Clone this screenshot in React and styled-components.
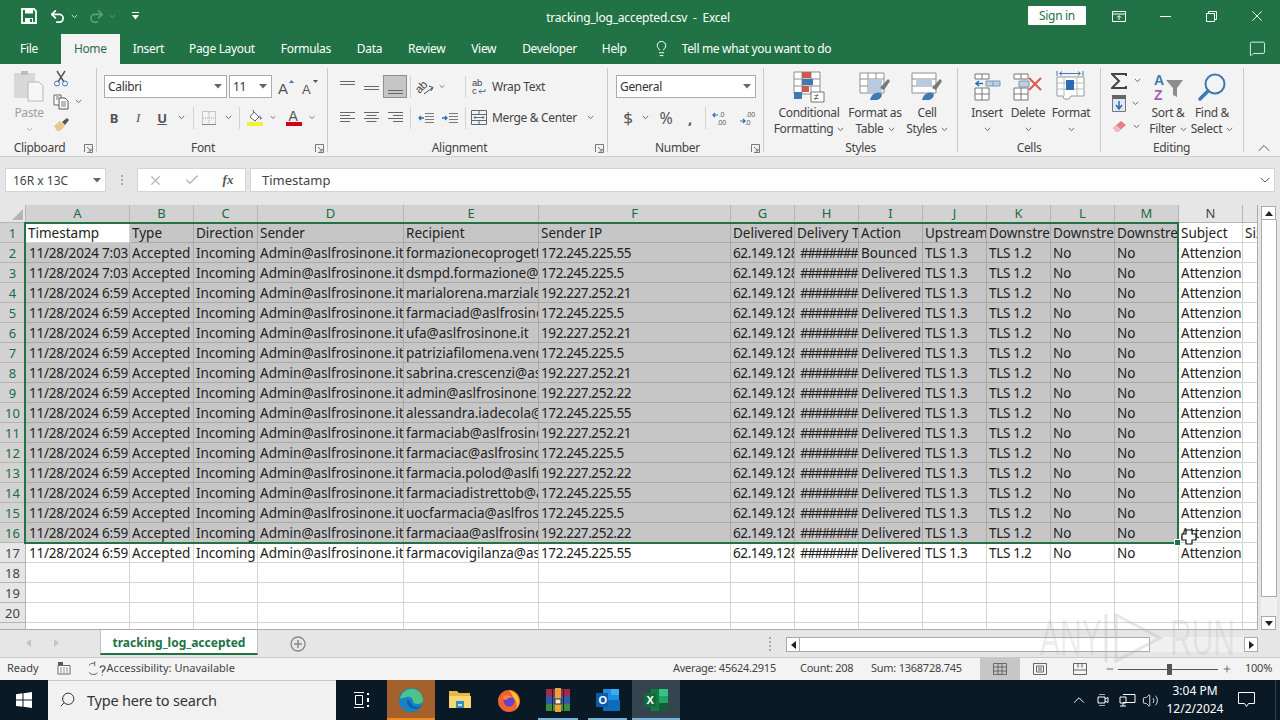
import React from 'react';
import styled, { createGlobalStyle } from 'styled-components';
import { Undo2, Redo2, Lightbulb, MessageSquare, X, Check, Minus, Plus, Search, ChevronUp, Volume2 } from 'lucide-react';

const GREEN = '#217346';
const UI = '"Noto Sans", "Open Sans", sans-serif';

const GlobalStyle = createGlobalStyle`
	html, body { margin: 0; padding: 0; background: #e6e6e6; }
	* { box-sizing: border-box; }
	#root { width: 1280px; height: 720px; overflow: hidden; }
`;

const Page = styled.div`
	position: relative;
	width: 1280px;
	height: 720px;
	display: flex;
	flex-direction: column;
	overflow: hidden;
	font-family: ${UI};
	font-size: 12px;
	letter-spacing: -0.33px;
	color: #444;
`;

/* title bar */
const TitleBar = styled.div`
	height: 32px;
	flex: none;
	background: ${GREEN};
	color: #fff;
	display: grid;
	grid-template-columns: 1fr auto 1fr;
	align-items: center;
`;
const QuickAccess = styled.div`
	display: flex;
	align-items: center;
	padding-left: 21px;
`;
const TitleText = styled.div`
	font-size: 12px;
	letter-spacing: -0.2px;
	padding: 2px 4px 0 0;
	white-space: pre;
`;
const WindowControls = styled.div`
	display: flex;
	align-items: center;
	justify-content: flex-end;
`;
const SignIn = styled.div`
	width: 58px;
	height: 19px;
	background: #fff;
	color: ${GREEN};
	border-radius: 1px;
	text-align: center;
	line-height: 19px;
	margin: 0 10px 2px 0;
`;
const WinButton = styled.div`
	width: 46px;
	height: 32px;
	display: flex;
	align-items: center;
	justify-content: center;
`;
const Slot = styled.div`
	width: ${p => p.$w || 24}px;
	height: ${p => p.$h || 22}px;
	margin-left: ${p => p.$ml || 0}px;
	flex: none;
	display: flex;
	align-items: center;
	justify-content: center;
	background: ${p => (p.$active ? '#c6c6c6' : 'transparent')};
	box-shadow: ${p => (p.$active ? 'inset 0 0 0 1px #8e8e8e' : 'none')};
`;

/* tabs */
const TabsRow = styled.div`
	height: 32px;
	flex: none;
	background: ${GREEN};
	display: flex;
	align-items: flex-end;
	color: #fff;
	padding-left: 20px;
`;
const Tab = styled.div`
	height: 30px;
	line-height: 30px;
	margin-left: ${p => p.$ml || 0}px;
	padding: ${p => (p.$active ? '0 13px' : '0')};
	background: ${p => (p.$active ? '#f3f3f3' : 'transparent')};
	color: ${p => (p.$active ? '#2c6e4b' : '#fff')};
	white-space: nowrap;
`;
const TellMe = styled.div`
	display: flex;
	align-items: center;
	height: 32px;
	margin-left: 26px;
	gap: 12px;
`;
const CommentSlot = styled.div`
	margin-left: auto;
	width: 46px;
	height: 32px;
	display: flex;
	align-items: center;
	justify-content: center;
`;

/* ribbon */
const Ribbon = styled.div`
	height: 93px;
	flex: none;
	background: #f3f3f3;
	border-bottom: 1px solid #cfcfcf;
	display: flex;
	padding-top: 4px;
`;
const Group = styled.div`
	width: ${p => p.$w}px;
	height: 84px;
	flex: none;
	display: flex;
	flex-direction: column;
	border-right: 1px solid #c8c8c8;
`;
const GroupBody = styled.div`
	height: 73px;
	flex: none;
	display: flex;
	align-items: flex-start;
`;
const GroupFoot = styled.div`
	height: 14px;
	flex: none;
	display: flex;
	align-items: center;
	line-height: 14px;
	padding-right: 3px;
`;
const FootLabel = styled.div`
	flex: 1;
	text-align: center;
	padding-left: ${p => p.$pl || 0}px;
	padding-right: ${p => p.$pr || 0}px;
`;
const ToolStack = styled.div`
	display: flex;
	flex-direction: column;
	gap: 8px;
	padding-top: 7px;
`;
const ToolRow = styled.div`
	display: flex;
	align-items: center;
	height: 23px;
	padding-left: ${p => p.$pl || 0}px;
`;
const Divider = styled.div`
	width: 1px;
	height: 22px;
	flex: none;
	margin-left: ${p => p.$ml || 0}px;
	background: #d2d2d2;
`;
const SelectBox = styled.div`
	width: ${p => p.$w}px;
	height: 23px;
	flex: none;
	margin-left: ${p => p.$ml || 0}px;
	background: #fff;
	border: 1px solid #ababab;
	display: flex;
	align-items: center;
	justify-content: space-between;
	padding: 0 4px 0 3px;
	color: #333;
`;
const RowText = styled.span`
	white-space: nowrap;
	color: #444;
`;
const BigButton = styled.div`
	width: ${p => p.$w}px;
	flex: none;
	margin-left: ${p => p.$ml || 0}px;
	padding-top: 3px;
	display: flex;
	flex-direction: column;
	align-items: center;
	color: ${p => (p.$dim ? '#a0a0a0' : '#444')};
`;
const BigIcon = styled.div`
	height: 32px;
	display: flex;
	align-items: center;
	justify-content: center;
`;
const BigLine = styled.div`
	height: 16px;
	line-height: 16px;
	margin-top: ${p => p.$mt || 0}px;
	white-space: nowrap;
	display: flex;
	align-items: center;
	gap: 4px;
`;
const SmallColumn = styled.div`
	display: flex;
	flex-direction: column;
	width: ${p => p.$w}px;
	margin-left: ${p => p.$ml || 0}px;
	padding-top: ${p => p.$pt || 0}px;
	gap: ${p => p.$gap || 0}px;
	flex: none;
`;
const SmallRow = styled.div`
	display: flex;
	align-items: center;
	height: 21px;
`;
const CollapseSlot = styled.div`
	flex: 1;
	display: flex;
	align-items: flex-end;
	justify-content: center;
	padding-left: 4px;
	height: 90px;
	color: #555;
`;

/* formula bar */
const FormulaRow = styled.div`
	height: 48px;
	flex: none;
	background: #e6e6e6;
	padding: 11px 5px 13px 5px;
	display: flex;
	align-items: stretch;
	letter-spacing: 0;
`;
const NameBox = styled.div`
	width: 101px;
	background: #fff;
	border: 1px solid #d4d4d4;
	display: flex;
	align-items: center;
	justify-content: space-between;
	padding: 0 4px 0 7px;
	color: #444;
`;
const GripDots = styled.div`
	width: 31px;
	display: flex;
	flex-direction: column;
	align-items: center;
	justify-content: center;
	gap: 2px;
	& > i {
		width: 2px;
		height: 2px;
		background: #aaa;
	}
`;
const FormulaButtons = styled.div`
	width: 109px;
	background: #fff;
	border: 1px solid #d4d4d4;
	display: flex;
	align-items: center;
	padding-left: 7px;
`;
const FormulaInput = styled.div`
	flex: 1;
	margin-left: 4px;
	background: #fff;
	border: 1px solid #d4d4d4;
	display: flex;
	align-items: center;
	justify-content: space-between;
	padding: 0 4px 0 11px;
	font-size: 13px;
	color: #444;
`;

/* sheet */
const SheetArea = styled.div`
	height: 425px;
	flex: none;
	display: flex;
	background: #e6e6e6;
`;
const GridWrap = styled.div`
	position: relative;
	width: 1258px;
	height: 425px;
	overflow: hidden;
	background: #fff;
	border-right: 1px solid #ababab;
	border-bottom: 1px solid #ababab;
`;
const Grid = styled.div`
	display: grid;
	grid-template-columns: 26px 104px 64px 64px 146px 135px 192px 64px 64px 64px 64px 64px 64px 64px 64px 15px;
	grid-template-rows: 18px;
	grid-auto-rows: 20px;
	font-size: 13.5px;
	letter-spacing: 0;
	color: #222;
`;
const Corner = styled.div`
	background: #e6e6e6;
	border-right: 1px solid #b5b5b5;
	border-bottom: 1px solid #b5b5b5;
	display: flex;
	align-items: flex-end;
	justify-content: flex-end;
	padding: 0 2px 2px 0;
`;
const ColHead = styled.div`
	background: ${p => (p.$sel ? '#d2d2d2' : '#e6e6e6')};
	color: ${p => (p.$sel ? '#1d6a43' : '#444')};
	border-right: 1px solid #b5b5b5;
	border-bottom: 1px solid #b5b5b5;
	text-align: center;
	line-height: 17px;
	font-size: 13px;
`;
const RowHead = styled.div`
	background: ${p => (p.$sel ? '#d2d2d2' : '#e6e6e6')};
	color: ${p => (p.$sel ? '#1d6a43' : '#444')};
	border-right: 1px solid #b5b5b5;
	border-bottom: 1px solid #b5b5b5;
	text-align: center;
	line-height: 20px;
	font-size: 13px;
`;
const Cell = styled.div`
	background: ${p => (p.$sel ? '#c6c6c6' : '#fff')};
	border-right: 1px solid ${p => (p.$sel ? '#a9a9a9' : '#d4d4d4')};
	border-bottom: 1px solid ${p => (p.$sel ? '#a9a9a9' : '#d4d4d4')};
	overflow: hidden;
	white-space: nowrap;
	line-height: 20px;
	padding: 0 ${p => (p.$right ? '1px' : '0')} 0 2px;
	text-align: ${p => (p.$right ? 'right' : 'left')};
	letter-spacing: ${p => p.$track || 0}px;
`;
const SelectionBox = styled.div`
	position: absolute;
	left: 24px;
	top: 17px;
	width: 1155px;
	height: 322px;
	border: 2px solid ${GREEN};
	pointer-events: none;
`;
const FillHandle = styled.div`
	position: absolute;
	right: -4px;
	bottom: -4px;
	width: 7px;
	height: 7px;
	background: ${GREEN};
	border: 1px solid #fff;
`;
const CursorMark = styled.svg`
	position: absolute;
	left: 1180px;
	top: 323px;
`;

/* scrollbars */
const VScroll = styled.div`
	flex: 1;
	padding: 1px 3px 0 3px;
	display: flex;
	flex-direction: column;
`;
const ArrowButton = styled.div`
	width: ${p => p.$w || 15}px;
	height: ${p => p.$h || 14}px;
	flex: none;
	background: #fff;
	border: 1px solid #ababab;
	display: flex;
	align-items: center;
	justify-content: center;
`;
const VThumb = styled.div`
	height: 377px;
	flex: none;
	background: #fff;
	border: 1px solid #ababab;
	border-top: none;
`;
const VTrack = styled.div`
	flex: 1;
	background: #f0f0f0;
`;

/* sheet tabs */
const SheetTabs = styled.div`
	height: 28px;
	flex: none;
	background: #e6e6e6;
	display: flex;
	align-items: flex-start;
	border-bottom: 1px solid #c8c8c8;
`;
const NavArrows = styled.div`
	width: 100px;
	height: 26px;
	padding-left: 26px;
	display: flex;
	align-items: center;
	gap: 23px;
`;
const SheetTab = styled.div`
	width: 158px;
	height: 25px;
	background: #fff;
	border-left: 1px solid #c0c0c0;
	border-right: 1px solid #c0c0c0;
	border-bottom: 2px solid ${GREEN};
	color: ${GREEN};
	font-weight: 700;
	font-size: 12px;
	letter-spacing: 0;
	text-align: center;
	line-height: 26px;
`;
const AddSheet = styled.div`
	width: 80px;
	height: 28px;
	display: flex;
	align-items: center;
	justify-content: center;
`;
const TabGrip = styled.div`
	margin-left: 431px;
	height: 28px;
	display: flex;
	flex-direction: column;
	justify-content: center;
	gap: 2px;
	& > i {
		width: 2px;
		height: 2px;
		background: #aaa;
	}
`;
const HScroll = styled.div`
	margin-left: 15px;
	width: 472px;
	height: 15px;
	margin-top: 7px;
	display: flex;
	align-items: stretch;
	background: #f0f0f0;
`;
const HThumb = styled.div`
	width: 350px;
	background: #fff;
	border: 1px solid #ababab;
	border-left: none;
`;
const HTrack = styled.div`
	flex: 1;
`;

/* status bar */
const StatusBar = styled.div`
	height: 22px;
	flex: none;
	background: #f3f3f3;
	display: flex;
	align-items: center;
	padding-left: 7px;
	font-size: 11px;
	line-height: 20px;
	letter-spacing: 0;
	color: #444;
`;
const StatusItem = styled.div`
	margin-left: ${p => p.$ml || 0}px;
	width: ${p => (p.$w ? p.$w + 'px' : 'auto')};
	height: 20px;
	margin-bottom: 2px;
	flex: none;
	white-space: nowrap;
	display: flex;
	align-items: center;
`;
const StatusRight = styled.div`
	margin-left: auto;
	width: 607px;
	height: 22px;
	flex: none;
	display: flex;
	align-items: center;
	letter-spacing: -0.25px;
`;
const ViewButton = styled.div`
	width: 40px;
	height: 22px;
	flex: none;
	background: ${p => (p.$active ? '#c6c6c6' : 'transparent')};
	display: flex;
	align-items: center;
	justify-content: center;
`;
const ZoomTrack = styled.div`
	position: relative;
	width: 100px;
	height: 1px;
	flex: none;
	margin-left: 3px;
	background: #555;
`;
const ZoomThumb = styled.div`
	position: absolute;
	left: 49px;
	top: -5px;
	width: 5px;
	height: 11px;
	background: #555;
`;

/* taskbar */
const Taskbar = styled.div`
	height: 40px;
	flex: none;
	background: #0a1926;
	display: flex;
	align-items: stretch;
	color: #fff;
`;
const StartButton = styled.div`
	width: 48px;
	display: flex;
	align-items: center;
	justify-content: center;
`;
const SearchBox = styled.div`
	width: 288px;
	flex: none;
	background: #f1f1f1;
	border-top: 1px solid #c8c8c8;
	color: #333;
	display: flex;
	align-items: center;
	padding: 0 0 2px 11px;
	gap: 11px;
	font-size: 14.5px;
	letter-spacing: -0.2px;
`;
const SearchGlass = styled(Search)`
	transform: scaleX(-1);
`;
const TaskItem = styled.div`
	width: ${p => p.$w || 48}px;
	flex: none;
	position: relative;
	background: ${p => p.$bg || 'transparent'};
	display: flex;
	align-items: center;
	justify-content: center;
	&::after {
		content: '';
		display: ${p => (p.$line ? 'block' : 'none')};
		position: absolute;
		left: ${p => p.$inset || 0}px;
		right: ${p => p.$inset || 0}px;
		bottom: 0;
		height: 2px;
		background: ${p => p.$line};
	}
`;
const Tray = styled.div`
	margin-left: auto;
	display: flex;
	align-items: center;
`;
const TrayIcon = styled.div`
	width: ${p => p.$w || 24}px;
	display: flex;
	align-items: center;
	justify-content: center;
`;
const Clock = styled.div`
	width: 70px;
	text-align: center;
	font-size: 12px;
	letter-spacing: 0;
	line-height: 18px;
`;
const NotifySlot = styled.div`
	width: 46px;
	padding-right: 12px;
	display: flex;
	align-items: center;
	justify-content: center;
	border-right: 1px solid #33414d;
	height: 40px;
	margin-right: 4px;
`;

/* watermark */
const Watermark = styled.div`
	position: absolute;
	left: 1040px;
	top: 610px;
	height: 56px;
	display: flex;
	align-items: center;
	pointer-events: none;
	font-family: "Liberation Sans", sans-serif;
	font-size: 50px;
	letter-spacing: 0;
	color: rgba(175, 175, 175, 0.22);
`;
const WatermarkWord = styled.span`
	display: inline-block;
	width: ${p => p.$w}px;
	margin-left: ${p => p.$ml || 0}px;
	transform: scaleX(0.6);
	transform-origin: left center;
	white-space: nowrap;
`;

const StyleLetter = styled.span`
	font-weight: ${p => (p.$b ? 700 : 400)};
	font-family: ${p => (p.$i ? '"Liberation Serif", serif' : '"Noto Sans", sans-serif')};
	font-style: ${p => (p.$i ? 'italic' : 'normal')};
	text-decoration: ${p => (p.$u ? 'underline' : 'none')};
	font-size: ${p => p.$size || 13}px;
	color: #555;
`;

/* small drawings */
const Chevron = ({ color = '#666' }) => (
	<svg width="7" height="5" viewBox="0 0 7 5"><path d="M.8 1l2.7 2.6L6.2 1" fill="none" stroke={color} strokeWidth="1" /></svg>
);
const Launcher = () => (
	<svg width="9" height="9" viewBox="0 0 9 9"><path d="M.5 8V.5H8.5M8.5 .5V8.5H3M3 3l4 4M7 4.5V7H4.5" fill="none" stroke="#777" /></svg>
);
const DropCaret = () => (
	<svg width="8" height="5" viewBox="0 0 8 5"><path d="M0 0h8L4 4.5z" fill="#666" /></svg>
);
const SaveIcon = () => (
	<svg width="16" height="16" viewBox="0 0 16 16"><path d="M1 1h12l2 2v12H1z" fill="none" stroke="#fff" strokeWidth="1.8" /><path d="M4 1.5h8v4H4zM4 10h8v5H4z" fill="#fff" /><path d="M9 11h2v3H9z" fill={GREEN} /></svg>
);
const ClipboardIcon = () => (
	<svg width="32" height="34" viewBox="0 0 32 34">
		<path d="M1 3h21v25H1z" fill="#d8d8d8" />
		<path d="M8 1h7v4H8z" fill="#bdbdbd" />
		<path d="M15 12h11l4 4v15H15z" fill="#f6f6f6" stroke="#b8b8b8" />
	</svg>
);
const ScissorsIcon = () => (
	<svg width="16" height="17" viewBox="0 0 16 17"><path d="M4 1l7 11M12 1L5 12" stroke="#555" strokeWidth="1.4" /><circle cx="4" cy="13.5" r="2.5" fill="none" stroke="#3e78b5" /><circle cx="12" cy="13.5" r="2.5" fill="none" stroke="#3e78b5" /></svg>
);
const CopyIcon = () => (
	<svg width="16" height="16" viewBox="0 0 16 16"><path d="M1 1h7v10H1z" fill="#fff" stroke="#666" /><path d="M6 4h6l3 3v8H6z" fill="#fff" stroke="#555" /><path d="M8 8h5M8 10h5M8 12h5M3 3h3M3 5h2" stroke="#777" /></svg>
);
const PainterIcon = () => (
	<svg width="17" height="15" viewBox="0 0 17 15"><path d="M1 9l6-5 5 5-5 5H4z" fill="#e8c98a" /><path d="M9 5l5-4 2 2-4 5z" fill="#555" /></svg>
);
const GrowFont = ({ up }) => (
	<svg width="18" height="16" viewBox="0 0 18 16">
		<text x="0" y="15" fontFamily="Liberation Sans" fontSize={up ? 15 : 13} fill="#555">A</text>
		<path d={up ? 'M11 4l2.5-3L16 4z' : 'M11 1l2.5 3L16 1z'} fill={up ? '#3e78b5' : '#555'} />
	</svg>
);
const BorderIcon = () => (
	<svg width="14" height="14" viewBox="0 0 14 14"><rect x=".5" y=".5" width="13" height="13" fill="none" stroke="#999" strokeDasharray="1 1" /><path d="M7 1v12M1 7h12" stroke="#aaa" strokeDasharray="1 1" /><path d="M0 13.5h14" stroke="#888" /></svg>
);
const FillIcon = () => (
	<svg width="16" height="17" viewBox="0 0 16 17"><path d="M3 8l4-5 5 5-4 4z" fill="#fff" stroke="#666" /><path d="M6 1l1 3" stroke="#666" /><path d="M12 6l3 3-1.5 2z" fill="#3e78b5" /><path d="M0 13h16v4H0z" fill="#f7f02e" /></svg>
);
const FontColorIcon = () => (
	<svg width="16" height="17" viewBox="0 0 16 17"><text x="2.5" y="12" fontFamily="Liberation Sans" fontSize="14" fill="#555">A</text><path d="M0 13h16v4H0z" fill="#d5000f" /></svg>
);
const AlignV = ({ pos }) => {
	const y = pos === 'top' ? 2 : pos === 'mid' ? 7 : 11;
	return (
		<svg width="15" height="16" viewBox="0 0 15 16"><path d={`M0 ${y}.5h15M0 ${y + 3}.5h15`} stroke="#666" /></svg>
	);
};
const AlignH = ({ pos }) => {
	const s = pos === 'left' ? [[0, 15], [0, 10], [0, 15], [0, 10]] : pos === 'center' ? [[0, 15], [2.5, 12.5], [0, 15], [2.5, 12.5]] : [[0, 15], [5, 15], [0, 15], [5, 15]];
	return (
		<svg width="15" height="13" viewBox="0 0 15 13">
			{s.map((l, i) => <path key={i} d={`M${l[0]} ${1.5 + i * 3}H${l[1]}`} stroke="#666" />)}
		</svg>
	);
};
const OrientIcon = () => (
	<svg width="20" height="18" viewBox="0 0 20 18"><text x="0" y="13" fontFamily="Liberation Sans" fontSize="11.5" fill="#444" transform="rotate(-45 6 9)">ab</text><path d="M9 16l8-6" stroke="#444" /><path d="M14 8l4 1.500-2 3.500" fill="none" stroke="#444" /></svg>
);
const WrapIcon = () => (
	<svg width="16" height="17" viewBox="0 0 16 17"><text x="1" y="8" fontFamily="Liberation Sans" fontSize="9.5" fill="#444">ab</text><text x="1" y="16" fontFamily="Liberation Sans" fontSize="9.5" fill="#444">c</text><path d="M14 11v2.5H8M10 11.5l-2 2 2 2" fill="none" stroke="#3e78b5" /></svg>
);
const IndentIcon = ({ dir }) => (
	<svg width="16" height="12" viewBox="0 0 16 12">
		<path d="M7 1.500h9M7 4.500h9M7 7.500h9M7 10.500h9" stroke="#777" />
		<path d={dir === 'in' ? 'M0 6h5M3 4l2 2-2 2' : 'M6 6H1M3 4L1 6l2 2'} fill="none" stroke="#2b6cb5" strokeWidth="1.3" />
	</svg>
);
const MergeIcon = () => (
	<svg width="16" height="15" viewBox="0 0 16 15"><path d="M.5.5h15v14H.5zM.5 4.500h15M.5 10.500h15M8 .5v4M8 10.500v4" fill="none" stroke="#666" /><path d="M3 7.500h10M4.500 6L3 7.500 4.500 9M11.500 6L13 7.500 11.500 9" fill="none" stroke="#3e78b5" /></svg>
);
const IncDec = ({ inc }) => (
	<svg width="17" height="14" viewBox="0 0 17 14">
		<text x={inc ? 7 : 6} y="6" fontFamily="Liberation Sans" fontSize="7" fill="#555">{inc ? '.0' : '.00'}</text>
		<text x="5" y="13.5" fontFamily="Liberation Sans" fontSize="7" fill="#555">{inc ? '.00' : '.0'}</text>
		<path d={inc ? 'M6 4H1M3 2L1 4l2 2' : 'M0 10h5M3 8l2 2-2 2'} fill="none" stroke="#2b6cb5" strokeWidth="1.2" />
	</svg>
);
const CondIcon = () => (
	<svg width="32" height="32" viewBox="0 0 32 32">
		<path d="M1 1h26v22H1zM1 8h26M1 15h26M9 1v22M18 1v22" fill="#fff" stroke="#8f8f8f" />
		<path d="M9 1h9v6H9z" fill="#d0574a" /><path d="M9 8h11v6H9z" fill="#3e78b5" /><path d="M9 15h7v6H9z" fill="#d0574a" /><path d="M1 21h8v7H1z" fill="#3e78b5" />
		<path d="M18 21h13v10H18z" fill="#fff" stroke="#777" />
		<text x="21" y="29" fontFamily="Liberation Sans" fontSize="9" fill="#444">≠</text>
	</svg>
);
const TableStyleIcon = () => (
	<svg width="32" height="30" viewBox="0 0 32 30">
		<path d="M1 1h24v20H1zM1 7h24M1 14h24M9 1v20M17 1v20" fill="#fff" stroke="#8f8f8f" />
		<path d="M9 7h14v14H9z" fill="#b9c9de" />
		<path d="M21 16l8-9 2 2-6 9z" fill="#777" />
		<path d="M11 28c1-6 7-9 11-7 2 2 0 6-4 7z" fill="#3e78b5" />
	</svg>
);
const CellStyleIcon = () => (
	<svg width="32" height="30" viewBox="0 0 32 30">
		<path d="M1 1h24v20H1zM1 7h24M1 14h24" fill="#fff" stroke="#8f8f8f" />
		<path d="M5 7h16v8H5z" fill="#b9c9de" />
		<path d="M21 16l8-9 2 2-6 9z" fill="#777" />
		<path d="M11 28c1-6 7-9 11-7 2 2 0 6-4 7z" fill="#3e78b5" />
	</svg>
);
const InsertIcon = () => (
	<svg width="28" height="28" viewBox="0 0 28 28">
		<path d="M2 1h14v5H2zM9 1v5M2 15h14v12H2zM2 21h14M9 15v12" fill="#fff" stroke="#777" />
		<path d="M13 8h14v5H13zM20 8v5" fill="#bcd0e6" stroke="#7d99b8" />
		<path d="M10 10.500H3M6 8l-3 2.500L6 13" fill="none" stroke="#2b6cb5" strokeWidth="1.6" />
	</svg>
);
const DeleteIcon = () => (
	<svg width="32" height="28" viewBox="0 0 32 28">
		<path d="M2 1h14v5H2zM9 1v5M2 15h14v12H2zM2 21h14M9 15v12" fill="#fff" stroke="#777" />
		<path d="M7 8h10v6H7z" fill="#bcd0e6" stroke="#7d99b8" />
		<path d="M17 5l12 12M29 5L17 17" stroke="#d9584b" strokeWidth="2" />
	</svg>
);
const FormatCellIcon = () => (
	<svg width="30" height="32" viewBox="0 0 30 32">
		<path d="M1 6h27v19H15l-2 3H8l-1-3H1z" fill="#fff" stroke="#999" />
		<path d="M1 12h27M1 18h27M8 6v19M21 6v19" stroke="#bbb" />
		<path d="M10 9h8v10h-8z" fill="#2b6cb5" />
		<path d="M4 2.500h20M6 .5L3.500 2.500 6 4.500M22 .5l2.500 2-2.500 2M1 0v5M27 0v5" fill="none" stroke="#3e78b5" />
	</svg>
);
const SigmaIcon = () => (
	<svg width="16" height="16" viewBox="0 0 16 16"><path d="M15 3V1H1l7 7-7 7h14v-2" fill="none" stroke="#444" strokeWidth="2" /></svg>
);
const FillDown = () => (
	<svg width="15" height="17" viewBox="0 0 15 17"><path d="M.5 3.500h13v13H.5z" fill="#dfe9f4" stroke="#777" /><path d="M0 0h14v4H0z" fill="#666" /><path d="M7 6v8M4 10l3 4 3-4" fill="none" stroke="#2b6cb5" strokeWidth="1.5" /></svg>
);
const EraserIcon = () => (
	<svg width="15" height="13" viewBox="0 0 15 13"><path d="M1 8l8-7 5 4-8 7H4z" fill="#e87b8a" /><path d="M1 8l3-3 5 4-3 3H4z" fill="#f2b9c1" /></svg>
);
const SortIcon = () => (
	<svg width="31" height="30" viewBox="0 0 31 30">
		<text x="1" y="13" fontFamily="Liberation Sans" fontSize="14" fontWeight="700" fill="#3e78b5">A</text>
		<text x="1" y="28" fontFamily="Liberation Sans" fontSize="14" fontWeight="700" fill="#a45fb0">Z</text>
		<path d="M13 8h17l-6 8v9l-4-2v-7z" fill="#8d8d8d" />
	</svg>
);
const FindIcon = () => (
	<svg width="30" height="30" viewBox="0 0 30 30"><circle cx="18" cy="12" r="9.500" fill="none" stroke="#3e78b5" strokeWidth="2" /><path d="M11 19l-8 8" stroke="#3e78b5" strokeWidth="3.500" strokeLinecap="round" /></svg>
);
const WinLogo = () => (
	<svg width="16" height="16" viewBox="0 0 16 16"><path d="M0 2.200l6.500-.9v6.300H0zM7.500 1.200L16 0v7.600H7.500zM0 8.500h6.500v6.300L0 13.900zM7.500 8.500H16V16l-8.500-1.200z" fill="#fff" /></svg>
);
const TaskViewIcon = () => (
	<svg width="17" height="16" viewBox="0 0 17 16"><path d="M1 .5h10M1 15.500h10M2.500 3.500h7v9h-7z" fill="none" stroke="#fff" /><path d="M14 1h2v2h-2zM14 6h2v4h-2zM14 13h2v2h-2z" fill="#fff" /></svg>
);
const EdgeIcon = () => (
	<svg width="24" height="24" viewBox="0 0 24 24">
		<circle cx="12" cy="12" r="12" fill="#1583c9" />
		<path d="M1 10C3 3 10 0 15 1c5 1 9 6 9 11 0 3-3 4-6 4-3 0-4-1-4-3 0-3-3-5-6-4-3 1-6 2-7 1z" fill="#4cc38a" />
		<path d="M8 13c0 5 4 8 9 8 2 0 4-1 5-3-4 2-9 1-10-3-1-3-4-4-4-2z" fill="#0e5fa8" />
	</svg>
);
const FolderIcon = () => (
	<svg width="22" height="20" viewBox="0 0 22 20"><path d="M0 1h8l2 2h11v15H0z" fill="#e8b93e" /><path d="M0 6h22v12H0z" fill="#f7d774" /><path d="M7 11h8v7H7z" fill="#2f8fd0" /><path d="M9 14h4v2H9z" fill="#e8d89a" /></svg>
);
const FirefoxIcon = () => (
	<svg width="24" height="24" viewBox="0 0 24 24">
		<circle cx="12" cy="13" r="11" fill="#f2622e" />
		<path d="M12 2c4 1 9 4 10 10 1 4-1 7-3 9 2-5 0-9-3-11 0-3-2-5-4-8z" fill="#fbbf2d" />
		<circle cx="12" cy="13" r="5.500" fill="#6a3fc9" />
		<path d="M6 9c3-2 8-2 10 1-3-1-6 0-7 2-2 0-3-1-3-3z" fill="#f78a2a" />
	</svg>
);
const RarIcon = () => (
	<svg width="24" height="24" viewBox="0 0 24 24">
		<path d="M0 1h24v7H0z" fill="#a4284a" /><path d="M0 8h24v8H0z" fill="#2e5aa8" /><path d="M0 16h24v7H0z" fill="#3d8a3e" />
		<path d="M6 0h1v24H6zM17 0h1v24h-1z" fill="#222" /><path d="M9 0h6v24H9z" fill="#e8a33a" /><path d="M9 11h6v5H9z" fill="#f3ead0" stroke="#333" />
	</svg>
);
const OutlookIcon = () => (
	<svg width="24" height="22" viewBox="0 0 24 22">
		<path d="M7 0h16v11H7z" fill="#1d8fe0" /><path d="M7 11h17v11H7z" fill="#0f6cbd" /><path d="M15 0h8v6h-8z" fill="#38b0f0" />
		<path d="M0 4h12v14H0z" fill="#0a5da8" />
		<text x="2.5" y="15" fontFamily="Liberation Sans" fontSize="11" fontWeight="700" fill="#fff">O</text>
	</svg>
);
const ExcelIcon = () => (
	<svg width="24" height="22" viewBox="0 0 24 22">
		<path d="M7 0h17v22H7z" fill="#107c41" /><path d="M15 0h9v7h-9z" fill="#33c481" /><path d="M15 7h9v7h-9z" fill="#21a366" /><path d="M15 14h9v8h-9z" fill="#185c37" />
		<path d="M0 4h12v14H0z" fill="#0f6b3a" />
		<text x="2.5" y="15" fontFamily="Liberation Sans" fontSize="11" fontWeight="700" fill="#fff">X</text>
	</svg>
);

const columns = ['A', 'B', 'C', 'D', 'E', 'F', 'G', 'H', 'I', 'J', 'K', 'L', 'M', 'N', ''];
const headers = ['Timestamp', 'Type', 'Direction', 'Sender', 'Recipient', 'Sender IP', 'Delivered', 'Delivery T', 'Action', 'Upstream', 'Downstre', 'Downstre', 'Downstre', 'Subject', 'Size'];
const tracking = { 0: -0.2, 2: -0.1, 5: -0.4, 6: -0.4, 7: -1.6, 9: -0.3, 10: -0.3 };
const log = [
	['formazionecoprogetti', '172.245.225.55'],
	['dsmpd.formazione@asl', '172.245.225.5'],
	['marialorena.marziale@', '192.227.252.21'],
	['farmaciad@aslfrosinone', '172.245.225.5'],
	['ufa@aslfrosinone.it', '192.227.252.21'],
	['patriziafilomena.venditti', '172.245.225.5'],
	['sabrina.crescenzi@aslf', '192.227.252.21'],
	['admin@aslfrosinone.it', '192.227.252.22'],
	['alessandra.iadecola@asl', '172.245.225.55'],
	['farmaciab@aslfrosinone', '192.227.252.21'],
	['farmaciac@aslfrosinone', '172.245.225.5'],
	['farmacia.polod@aslfrosi', '192.227.252.22'],
	['farmaciadistrettob@asl', '172.245.225.55'],
	['uocfarmacia@aslfrosinone', '172.245.225.5'],
	['farmaciaa@aslfrosinone', '192.227.252.22'],
	['farmacovigilanza@aslfro', '172.245.225.55'],
];

function App() {
	const body = [];
	log.forEach((row, r) => {
		const sel = r < 15;
		const values = [
			`11/28/2024 ${r < 2 ? '7:03' : '6:59'}`, 'Accepted', 'Incoming', 'Admin@aslfrosinone.it', row[0], row[1],
			'62.149.128.1', '########', r === 0 ? 'Bounced' : 'Delivered', 'TLS 1.3', 'TLS 1.2', 'No', 'No', 'Attenzione', '',
		];
		body.push(<RowHead key={'r' + r} $sel={sel}>{r + 2}</RowHead>);
		values.forEach((v, c) => {
			body.push(<Cell key={r + '-' + c} $sel={sel && c < 13} $right={c === 0 || c === 7} $track={tracking[c]}>{v}</Cell>);
		});
	});
	[18, 19, 20, 21].forEach(n => {
		body.push(<RowHead key={'r' + n}>{n}</RowHead>);
		columns.forEach((c, i) => body.push(<Cell key={n + '-' + i} />));
	});

	return (
		<Page>
			<GlobalStyle />
			<TitleBar>
				<QuickAccess>
					<SaveIcon />
					<Slot $w={28} $h={20} $ml={6}><Undo2 size={17} color="#fff" strokeWidth={2.4} /></Slot>
					<Chevron color="#cfe3d8" />
					<Slot $w={26} $h={20} $ml={5}><Redo2 size={17} color="#5c9c7c" strokeWidth={2.4} /></Slot>
					<Chevron color="#5c9c7c" />
					<Slot $w={20} $h={20} $ml={9}>
						<svg width="7" height="8" viewBox="0 0 7 8"><path d="M0 0h7v1H0zM0 3h7L3.5 7.5z" fill="#fff" /></svg>
					</Slot>
				</QuickAccess>
				<TitleText>tracking_log_accepted.csv  -  Excel</TitleText>
				<WindowControls>
					<SignIn>Sign in</SignIn>
					<WinButton>
						<svg width="14" height="11" viewBox="0 0 14 11"><path d="M.5.5h13v10H.5zM.5 3h13M7 9V5M5 6.5l2-2 2 2" fill="none" stroke="#fff" /></svg>
					</WinButton>
					<WinButton><svg width="11" height="1" viewBox="0 0 11 1"><path d="M0 .5h11" stroke="#fff" /></svg></WinButton>
					<WinButton>
						<svg width="11" height="11" viewBox="0 0 11 11"><path d="M.5 2.5h8v8h-8zM2.5 2.5v-2h8v8h-2" fill="none" stroke="#fff" /></svg>
					</WinButton>
					<WinButton><X size={18} color="#fff" strokeWidth={1.2} /></WinButton>
				</WindowControls>
			</TitleBar>

			<TabsRow>
				<Tab>File</Tab>
				<Tab $active $ml={23}>Home</Tab>
				<Tab $ml={13}>Insert</Tab>
				<Tab $ml={25}>Page Layout</Tab>
				<Tab $ml={26}>Formulas</Tab>
				<Tab $ml={26}>Data</Tab>
				<Tab $ml={26}>Review</Tab>
				<Tab $ml={26}>View</Tab>
				<Tab $ml={26}>Developer</Tab>
				<Tab $ml={25}>Help</Tab>
				<TellMe>
					<Lightbulb size={17} color="#fff" strokeWidth={1.4} />
					<span>Tell me what you want to do</span>
				</TellMe>
				<CommentSlot><MessageSquare size={17} color="#fff" strokeWidth={1.2} /></CommentSlot>
			</TabsRow>

			<Ribbon>
				<Group $w={97}>
					<GroupBody>
						<BigButton $w={32} $ml={13} $dim>
							<BigIcon><ClipboardIcon /></BigIcon>
							<BigLine $mt={2}>Paste</BigLine>
							<BigLine><Chevron color="#aaa" /></BigLine>
						</BigButton>
						<SmallColumn $w={36} $ml={5} $gap={2}>
							<SmallRow><Slot $w={22} $h={21}><ScissorsIcon /></Slot></SmallRow>
							<SmallRow>
								<Slot $w={22} $h={21}><CopyIcon /></Slot>
								<Slot $w={7} $h={21} $ml={3}><Chevron /></Slot>
							</SmallRow>
							<SmallRow><Slot $w={22} $h={21}><PainterIcon /></Slot></SmallRow>
						</SmallColumn>
					</GroupBody>
					<GroupFoot><FootLabel $pr={5}>Clipboard</FootLabel><Launcher /></GroupFoot>
				</Group>

				<Group $w={231}>
					<GroupBody>
						<ToolStack>
							<ToolRow>
								<SelectBox $w={123} $ml={7}><span>Calibri</span><DropCaret /></SelectBox>
								<SelectBox $w={43} $ml={2}><span>11</span><DropCaret /></SelectBox>
								<Slot $w={24} $ml={3}><GrowFont up /></Slot>
								<Slot $w={24}><GrowFont /></Slot>
							</ToolRow>
							<ToolRow $pl={5}>
								<Slot><StyleLetter $b>B</StyleLetter></Slot>
								<Slot><StyleLetter $i>I</StyleLetter></Slot>
								<Slot><StyleLetter $b $u>U</StyleLetter></Slot>
								<Slot $w={14}><Chevron /></Slot>
								<Divider $ml={5} />
								<Slot $w={30}><BorderIcon /></Slot>
								<Slot $w={8}><Chevron /></Slot>
								<Divider $ml={7} />
								<Slot $w={30}><FillIcon /></Slot>
								<Slot $w={6}><Chevron /></Slot>
								<Slot $w={30} $ml={3}><FontColorIcon /></Slot>
								<Slot $w={6}><Chevron /></Slot>
							</ToolRow>
						</ToolStack>
					</GroupBody>
					<GroupFoot><FootLabel $pr={6}>Font</FootLabel><Launcher /></GroupFoot>
				</Group>

				<Group $w={280}>
					<GroupBody>
						<ToolStack>
							<ToolRow $pl={7}>
								<Slot><AlignV pos="top" /></Slot>
								<Slot><AlignV pos="mid" /></Slot>
								<Slot $h={23} $active><AlignV pos="bottom" /></Slot>
								<Divider $ml={3} />
								<Slot $w={28}><OrientIcon /></Slot>
								<Slot $w={6}><Chevron /></Slot>
								<Divider $ml={20} />
								<Slot $w={26}><WrapIcon /></Slot>
								<RowText>Wrap Text</RowText>
							</ToolRow>
							<ToolRow $pl={7}>
								<Slot><AlignH pos="left" /></Slot>
								<Slot><AlignH pos="center" /></Slot>
								<Slot><AlignH pos="right" /></Slot>
								<Divider $ml={3} />
								<Slot $w={30}><IndentIcon dir="out" /></Slot>
								<Slot $w={18}><IndentIcon dir="in" /></Slot>
								<Divider $ml={6} />
								<Slot $w={26}><MergeIcon /></Slot>
								<RowText>Merge &amp; Center</RowText>
								<Slot $w={10} $ml={9}><Chevron /></Slot>
							</ToolRow>
						</ToolStack>
					</GroupBody>
					<GroupFoot><FootLabel $pr={4}>Alignment</FootLabel><Launcher /></GroupFoot>
				</Group>

				<Group $w={156}>
					<GroupBody>
						<ToolStack>
							<ToolRow>
								<SelectBox $w={140} $ml={8}><span>General</span><DropCaret /></SelectBox>
							</ToolRow>
							<ToolRow $pl={8}>
								<Slot><StyleLetter $size={17}>$</StyleLetter></Slot>
								<Slot $w={10}><Chevron /></Slot>
								<Slot $w={32}><StyleLetter $size={16}>%</StyleLetter></Slot>
								<Slot $w={16}><StyleLetter $b $size={15}>,</StyleLetter></Slot>
								<Divider $ml={7} />
								<Slot $w={28}><IncDec inc /></Slot>
								<Slot $w={28}><IncDec /></Slot>
							</ToolRow>
						</ToolStack>
					</GroupBody>
					<GroupFoot><FootLabel $pr={4}>Number</FootLabel><Launcher /></GroupFoot>
				</Group>

				<Group $w={194}>
					<GroupBody>
						<BigButton $w={78} $ml={6}>
							<BigIcon><CondIcon /></BigIcon>
							<BigLine $mt={2}>Conditional</BigLine>
							<BigLine>Formatting <Chevron /></BigLine>
						</BigButton>
						<BigButton $w={54}>
							<BigIcon><TableStyleIcon /></BigIcon>
							<BigLine $mt={2}>Format as</BigLine>
							<BigLine>Table <Chevron /></BigLine>
						</BigButton>
						<BigButton $w={50}>
							<BigIcon><CellStyleIcon /></BigIcon>
							<BigLine $mt={2}>Cell</BigLine>
							<BigLine>Styles <Chevron /></BigLine>
						</BigButton>
					</GroupBody>
					<GroupFoot><FootLabel $pl={3}>Styles</FootLabel></GroupFoot>
				</Group>

				<Group $w={143}>
					<GroupBody>
						<BigButton $w={42} $ml={8}>
							<BigIcon><InsertIcon /></BigIcon>
							<BigLine $mt={2}>Insert</BigLine>
							<BigLine><Chevron /></BigLine>
						</BigButton>
						<BigButton $w={40}>
							<BigIcon><DeleteIcon /></BigIcon>
							<BigLine $mt={2}>Delete</BigLine>
							<BigLine><Chevron /></BigLine>
						</BigButton>
						<BigButton $w={46}>
							<BigIcon><FormatCellIcon /></BigIcon>
							<BigLine $mt={2}>Format</BigLine>
							<BigLine><Chevron /></BigLine>
						</BigButton>
					</GroupBody>
					<GroupFoot><FootLabel $pl={3}>Cells</FootLabel></GroupFoot>
				</Group>

				<Group $w={143}>
					<GroupBody>
						<SmallColumn $w={38} $ml={7} $pt={2} $gap={2}>
							<SmallRow><Slot $w={22} $h={21}><SigmaIcon /></Slot><Slot $w={14} $h={21}><Chevron /></Slot></SmallRow>
							<SmallRow><Slot $w={22} $h={21}><FillDown /></Slot><Slot $w={10} $h={21}><Chevron /></Slot></SmallRow>
							<SmallRow><Slot $w={22} $h={21}><EraserIcon /></Slot><Slot $w={12} $h={21}><Chevron /></Slot></SmallRow>
						</SmallColumn>
						<BigButton $w={44}>
							<BigIcon><SortIcon /></BigIcon>
							<BigLine $mt={2}>Sort &amp;</BigLine>
							<BigLine>Filter <Chevron /></BigLine>
						</BigButton>
						<BigButton $w={44}>
							<BigIcon><FindIcon /></BigIcon>
							<BigLine $mt={2}>Find &amp;</BigLine>
							<BigLine>Select <Chevron /></BigLine>
						</BigButton>
					</GroupBody>
					<GroupFoot><FootLabel $pl={2}>Editing</FootLabel></GroupFoot>
				</Group>
				<CollapseSlot><ChevronUp size={20} strokeWidth={1.2} /></CollapseSlot>
			</Ribbon>

			<FormulaRow>
				<NameBox><span>16R x 13C</span><DropCaret /></NameBox>
				<GripDots><i /><i /><i /></GripDots>
				<FormulaButtons>
					<Slot $w={20} $h={20}><X size={15} color="#b5b5b5" strokeWidth={2} /></Slot>
					<Slot $w={20} $h={20} $ml={17}><Check size={16} color="#b5b5b5" strokeWidth={2} /></Slot>
					<Slot $w={20} $h={20} $ml={16}>
						<StyleLetter $i $b>fx</StyleLetter>
					</Slot>
				</FormulaButtons>
				<FormulaInput>
					<span>Timestamp</span>
					<svg width="10" height="6" viewBox="0 0 10 6"><path d="M.7 1L5 5l4.300-4" fill="none" stroke="#555" /></svg>
				</FormulaInput>
			</FormulaRow>

			<SheetArea>
				<GridWrap>
					<Grid>
						<Corner>
							<svg width="11" height="11" viewBox="0 0 11 11"><path d="M11 0v11H0z" fill="#b5b5b5" /></svg>
						</Corner>
						{columns.map((c, i) => <ColHead key={'h' + i} $sel={i < 13}>{c}</ColHead>)}
						<RowHead $sel>1</RowHead>
						{headers.map((text, i) => <Cell key={'t' + i} $sel={i < 13 && i > 0}>{text}</Cell>)}
						{body}
					</Grid>
					<SelectionBox><FillHandle /></SelectionBox>
					<CursorMark width="18" height="18" viewBox="0 0 18 18">
						<path d="M6 2h6v4h4v6h-4v4H6v-4H2V6h4z" fill="#fff" stroke="#111" strokeWidth="1.2" />
					</CursorMark>
				</GridWrap>
				<VScroll>
					<ArrowButton><svg width="8" height="5" viewBox="0 0 8 5"><path d="M4 0l4 5H0z" fill="#222" /></svg></ArrowButton>
					<VThumb />
					<VTrack />
					<ArrowButton><svg width="8" height="5" viewBox="0 0 8 5"><path d="M0 0h8L4 5z" fill="#222" /></svg></ArrowButton>
				</VScroll>
			</SheetArea>

			<SheetTabs>
				<NavArrows>
					<svg width="5" height="8" viewBox="0 0 5 8"><path d="M5 0v8L0 4z" fill="#c4c4c4" /></svg>
					<svg width="5" height="8" viewBox="0 0 5 8"><path d="M0 0v8l5-4z" fill="#c4c4c4" /></svg>
				</NavArrows>
				<SheetTab>tracking_log_accepted</SheetTab>
				<AddSheet>
					<svg width="16" height="16" viewBox="0 0 16 16"><circle cx="8" cy="8" r="7" fill="none" stroke="#888" strokeWidth="1.3" /><path d="M8 4v8M4 8h8" stroke="#888" strokeWidth="1.5" /></svg>
				</AddSheet>
				<TabGrip><i /><i /><i /><i /></TabGrip>
				<HScroll>
					<ArrowButton $w={14} $h={15}><svg width="5" height="8" viewBox="0 0 5 8"><path d="M5 0v8L0 4z" fill="#222" /></svg></ArrowButton>
					<HThumb />
					<HTrack />
					<ArrowButton $w={14} $h={15}><svg width="5" height="8" viewBox="0 0 5 8"><path d="M0 0h0v8l5-4z" fill="#222" /></svg></ArrowButton>
				</HScroll>
			</SheetTabs>

			<StatusBar>
				<StatusItem>Ready</StatusItem>
				<StatusItem $ml={18}>
					<svg width="14" height="14" viewBox="0 0 14 14"><path d="M1 4.500h12V13H1z" fill="#fff" stroke="#666" /><path d="M1 1h5v3H1z" fill="#555" /><path d="M3 7h8M3 9h8M3 11h8" stroke="#888" strokeDasharray="2 1" /></svg>
				</StatusItem>
				<StatusItem $ml={18}>
					<svg width="18" height="15" viewBox="0 0 19 15"><path d="M6 2a6 6 0 1 0 3 10" fill="none" stroke="#555" /><path d="M6 0v5" stroke="#555" /><path d="M12 7c0-3 5-3 5 0 0 2-3 2-3 5M14 14v1" fill="none" stroke="#555" strokeWidth="1.4" /></svg>
					Accessibility: Unavailable
				</StatusItem>
				<StatusRight>
					<StatusItem $w={127}>Average: 45624.2915</StatusItem>
					<StatusItem $w={71}>Count: 208</StatusItem>
					<StatusItem $w={109}>Sum: 1368728.745</StatusItem>
					<ViewButton $active>
						<svg width="14" height="12" viewBox="0 0 14 12"><path d="M.5.500h13v11H.5zM.5 4h13M.5 8h13M5 .5v11M9 .5v11" fill="none" stroke="#666" /></svg>
					</ViewButton>
					<ViewButton>
						<svg width="14" height="12" viewBox="0 0 14 12"><path d="M.5.500h13v11H.5zM3.500 3h7v6h-7zM5 5h4M5 7h4" fill="none" stroke="#666" /></svg>
					</ViewButton>
					<ViewButton>
						<svg width="14" height="12" viewBox="0 0 14 12"><path d="M.5.500h13v11H.5zM.5 7h13M5 .5v4M9 .5v4" fill="none" stroke="#666" /></svg>
					</ViewButton>
					<Slot $w={10} $h={10} $ml={5}><Minus size={10} color="#555" /></Slot>
					<ZoomTrack><ZoomThumb /></ZoomTrack>
					<Slot $w={10} $h={10} $ml={4}><Plus size={10} color="#555" /></Slot>
					<StatusItem $ml={13}>100%</StatusItem>
				</StatusRight>
			</StatusBar>

			<Taskbar>
				<StartButton><WinLogo /></StartButton>
				<SearchBox>
					<SearchGlass size={17} color="#333" strokeWidth={1.4} />
					<span>Type here to search</span>
				</SearchBox>
				<TaskItem $w={51}><TaskViewIcon /></TaskItem>
				<TaskItem $bg="#a5612b" $line="#f08a1d"><EdgeIcon /></TaskItem>
				<TaskItem $w={49}><FolderIcon /></TaskItem>
				<TaskItem $w={49}><FirefoxIcon /></TaskItem>
				<TaskItem $w={50} $line="#7ab2d8" $inset={5}><RarIcon /></TaskItem>
				<TaskItem $w={49} $line="#7ab2d8" $inset={5}><OutlookIcon /></TaskItem>
				<TaskItem $bg="#34454f" $line="#7ab2d8"><ExcelIcon /></TaskItem>
				<Tray>
					<TrayIcon $w={26}><ChevronUp size={18} strokeWidth={1.3} /></TrayIcon>
					<TrayIcon $w={22}>
						<svg width="14" height="16" viewBox="0 0 14 16"><path d="M2 5h7v6H2zM9 7l3-1.500v5L9 9" fill="none" stroke="#fff" /><path d="M3 2.500h6M3 13.500h6" stroke="#aaa" /></svg>
					</TrayIcon>
					<TrayIcon $w={26}>
						<svg width="17" height="14" viewBox="0 0 17 14"><path d="M4 1.500h12v8H4M1 4h6v6H1zM4 10v3M1 13h6" fill="none" stroke="#fff" /></svg>
					</TrayIcon>
					<TrayIcon $w={20}><Volume2 size={17} strokeWidth={1.2} /></TrayIcon>
					<Clock>3:04 PM<br />12/2/2024</Clock>
					<NotifySlot>
						<svg width="17" height="16" viewBox="0 0 17 16"><path d="M.5.500h16v11h-6l-2 3-2-3h-6z" fill="none" stroke="#fff" /></svg>
					</NotifySlot>
				</Tray>
			</Taskbar>

			<Watermark>
				<WatermarkWord $w={62}>ANY</WatermarkWord>
				<svg width="62" height="52" viewBox="0 0 62 52"><path d="M4 2v48M14 3v46l44-23z" fill="none" stroke="rgba(175,175,175,.3)" strokeWidth="3" /></svg>
				<WatermarkWord $w={62} $ml={6}>RUN</WatermarkWord>
			</Watermark>
		</Page>
	);
}

export default App;
